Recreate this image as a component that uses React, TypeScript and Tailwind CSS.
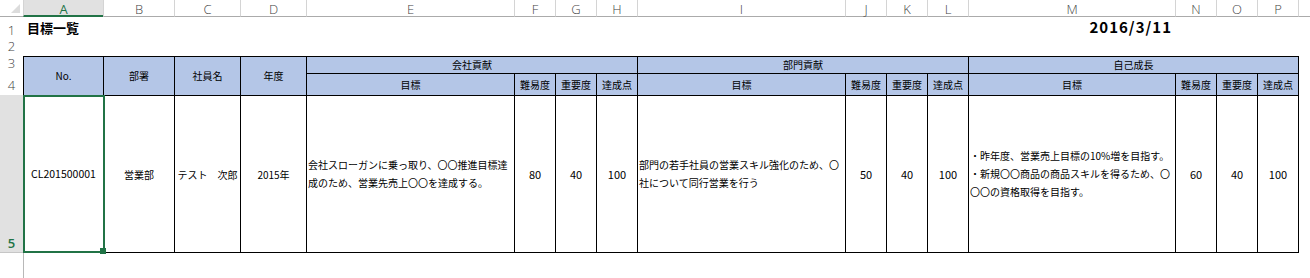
import React from "react";

const jp = "font-['Noto_Sans_CJK_JP',sans-serif]";

function ColHead({ label, active }: { label: string; active?: boolean }) {
  return (
    <div
      className={
        active
          ? "flex items-center justify-center border-l border-[#d4d4d4] border-b-2 border-b-[#217346] bg-[#e1e1e1] pt-[3px] font-['Open_Sans',sans-serif] text-[13px] leading-none text-[#217346]"
          : "flex items-center justify-center border-l border-[#d4d4d4] border-b border-b-[#ababab] bg-white pt-[3px] font-['Open_Sans',sans-serif] text-[13px] font-light leading-none text-[#444]"
      }
    >
      {label}
    </div>
  );
}

function RowHead({ n }: { n: string }) {
  return (
    <div className="flex items-end justify-center pb-[3px] font-['Open_Sans',sans-serif] text-[13px] font-light leading-none text-[#444]">
      {n}
    </div>
  );
}

function Head({ children, className = "" }: { children?: React.ReactNode; className?: string }) {
  return (
    <div className={"flex items-center justify-center border-l border-t border-black bg-[#b4c6e7] text-[10px] leading-none text-black " + className}>
      {children}
    </div>
  );
}

function Num({ children }: { children: React.ReactNode }) {
  return (
    <div className="flex items-center justify-center border-l border-t border-b border-black text-[11px] text-black">
      {children}
    </div>
  );
}

function Goal({ lines }: { lines: string[] }) {
  return (
    <div className="flex flex-col justify-center border-l border-t border-b border-black px-px text-[10px] leading-[18px] text-black whitespace-nowrap">
      {lines.map((l) => (
        <span key={l}>{l}</span>
      ))}
    </div>
  );
}

export default function App() {
  const letters = ["A", "B", "C", "D", "E", "F", "G", "H", "I", "J", "K", "L", "M", "N", "O", "P", ""];

  return (
    <div className={"h-[278px] w-[1310px] overflow-hidden bg-white " + jp}>
      <div className="grid grid-cols-[23px_80px_71px_66px_66px_208px_41px_41px_41px_208px_41px_41px_41px_207px_41px_41px_41px_1fr] grid-rows-[17px_23px_16px_17px_22px_158px_25px]">
        {/* column headers */}
        <div className="relative border-b border-[#ababab] bg-white">
          <div className="absolute right-[3px] bottom-[3px] h-0 w-0 border-l-[9px] border-t-[9px] border-l-transparent border-t-transparent border-r-0 border-b-[9px] border-b-[#dcdcdc]" />
        </div>
        {letters.map((l, i) => (
          <ColHead key={i} label={l} active={l === "A"} />
        ))}

        {/* row 1 */}
        <RowHead n="1" />
        <div className="col-span-12 flex items-end pb-[6px] pl-1 text-[13px] font-bold leading-none whitespace-nowrap text-black">
          目標一覧
        </div>
        <div className="flex items-end justify-end pb-[6px] pr-[3px] text-[15px] font-bold leading-none tracking-[1px] text-black">
          2016/3/11
        </div>
        <div className="col-span-4" />

        {/* row 2 */}
        <RowHead n="2" />
        <div className="col-span-17" />

        {/* row 3 */}
        <RowHead n="3" />
        <Head className="row-span-2 text-[9px]">No.</Head>
        <Head className="row-span-2">部署</Head>
        <Head className="row-span-2">社員名</Head>
        <Head className="row-span-2">年度</Head>
        <Head className="col-span-4">会社貢献</Head>
        <Head className="col-span-4">部門貢献</Head>
        <Head className="col-span-4">自己成長</Head>
        <div className="row-span-2 border-l border-black" />

        {/* row 4 */}
        <RowHead n="4" />
        <Head>目標</Head>
        <Head>難易度</Head>
        <Head>重要度</Head>
        <Head>達成点</Head>
        <Head>目標</Head>
        <Head>難易度</Head>
        <Head>重要度</Head>
        <Head>達成点</Head>
        <Head>目標</Head>
        <Head>難易度</Head>
        <Head>重要度</Head>
        <Head>達成点</Head>

        {/* row 5 */}
        <div className="flex items-end justify-center border-b border-[#c6c6c6] bg-[#e1e1e1] pb-[2px] font-['Open_Sans',sans-serif] text-[13px] font-semibold leading-none text-[#217346]">
          5
        </div>
        <div className="relative flex items-center justify-center border-l border-t border-b border-black text-[10.5px] text-black">
          CL201500001
          <div className="pointer-events-none absolute -top-px -left-px -right-[2px] -bottom-px border-2 border-[#217346]" />
          <div className="absolute -right-[3px] -bottom-[2px] h-[6px] w-[6px] bg-[#217346]" />
        </div>
        <div className="flex items-center justify-center border-l border-t border-b border-black text-[10px] text-black">営業部</div>
        <div className="flex items-center justify-center border-l border-t border-b border-black text-[10px] text-black whitespace-pre">テスト　次郎</div>
        <div className="flex items-center justify-center border-l border-t border-b border-black text-[10px] text-black">2015年</div>
        <Goal lines={["会社スローガンに乗っ取り、〇〇推進目標達", "成のため、営業先売上〇〇を達成する。"]} />
        <Num>80</Num>
        <Num>40</Num>
        <Num>100</Num>
        <Goal lines={["部門の若手社員の営業スキル強化のため、〇", "社について同行営業を行う"]} />
        <Num>50</Num>
        <Num>40</Num>
        <Num>100</Num>
        <Goal
          lines={[
            "・昨年度、営業売上目標の10%増を目指す。",
            "・新規〇〇商品の商品スキルを得るため、〇",
            "〇〇の資格取得を目指す。",
          ]}
        />
        <Num>60</Num>
        <Num>40</Num>
        <Num>100</Num>
        <div className="border-l border-black" />

        {/* rest */}
        <div />
        <div className="col-span-17 border-l border-[#b8b8b8]" />
      </div>
    </div>
  );
}
